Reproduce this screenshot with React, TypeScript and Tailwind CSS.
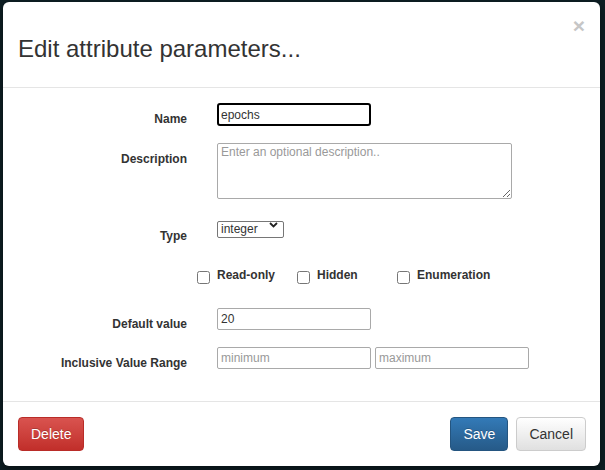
import { useState } from "react";

const labelCls =
  "w-[184px] shrink-0 pt-[8px] text-right text-[12px] leading-[17px] font-bold text-[#333]";
const inputCls =
  "h-[22px] border border-[#a9a9a9] rounded-[2px] px-[3px] text-[12px] text-[#333] placeholder:text-[#999] outline-none bg-white";

const App = () => {
  const [name, setName] = useState<string>("epochs");
  const [desc, setDesc] = useState<string>("");
  const [type, setType] = useState<string>("integer");
  const [defaultValue, setDefaultValue] = useState<string>("20");

  return (
    <div
      className="w-[605px] h-[470px] overflow-hidden bg-[#0e1f24] pt-[2px] pl-[3px]"
      style={{ fontFamily: '"Liberation Sans", Arial, sans-serif' }}
    >
      <div className="w-[597px] h-[464px] bg-white rounded-[6px] flex flex-col shadow-[0_3px_9px_rgba(0,0,0,0.5)]">
        {/* Header */}
        <div className="h-[86px] shrink-0 border-b border-[#e5e5e5] flex justify-between pl-[15px] pr-[15px]">
          <h4 className="pt-[34px] text-[24px] leading-[26px] text-[#333]">
            Edit attribute parameters...
          </h4>
          <button className="mt-[13px] self-start text-[21px] leading-[21px] font-bold text-[#c6c6c6]">
            ×
          </button>
        </div>

        {/* Body */}
        <div className="flex-1 pt-[15px]">
          {/* Name */}
          <div className="flex gap-[30px]">
            <label className={labelCls}>Name</label>
            <input
              type="text"
              value={name}
              onChange={(e) => setName(e.target.value)}
              className="h-[23px] w-[154px] border-2 border-black rounded-[3px] px-[2px] text-[12px] text-[#333] outline-none"
            />
          </div>

          {/* Description */}
          <div className="flex gap-[30px] mt-[15px]">
            <label className={labelCls}>Description</label>
            <textarea
              value={desc}
              onChange={(e) => setDesc(e.target.value)}
              placeholder="Enter an optional description.."
              className="h-[56px] w-[295px] border border-[#a9a9a9] rounded-[2px] px-[3px] py-[1px] text-[12px] leading-[15px] text-[#333] placeholder:text-[#999] outline-none"
            />
          </div>

          {/* Type */}
          <div className="flex gap-[30px] mt-[17px]">
            <label className="w-[184px] shrink-0 pt-[12px] text-right text-[12px] leading-[17px] font-bold text-[#333]">
              Type
            </label>
            <div className="relative w-[67px] h-[17px]">
              <select
                value={type}
                onChange={(e) => setType(e.target.value)}
                className="appearance-none w-full h-full border border-[#767676] rounded-[2px] pl-[3px] text-[12px] leading-[15px] text-[#333] bg-white outline-none"
              >
                <option value="integer">integer</option>
                <option value="float">float</option>
                <option value="string">string</option>
              </select>
              <svg
                className="absolute right-[6px] top-[6px] pointer-events-none"
                width="9"
                height="6"
                viewBox="0 0 9 6"
              >
                <path d="M1 1l3.5 3.5L8 1" fill="none" stroke="#222" strokeWidth="1.8" />
              </svg>
            </div>
          </div>

          {/* Checkboxes */}
          <div className="flex ml-[194px] mt-[20px] h-[20px] items-center">
            {["Read-only", "Hidden", "Enumeration"].map((item) => (
              <label key={item} className="w-[100px] flex items-center gap-[7px]">
                <input
                  type="checkbox"
                  className="w-[13px] h-[13px] mt-[4px] m-0 shrink-0"
                />
                <span className="text-[12px] font-bold leading-[17px] text-[#333]">
                  {item}
                </span>
              </label>
            ))}
          </div>

          {/* Default value */}
          <div className="flex gap-[30px] mt-[23px]">
            <label className={labelCls}>Default value</label>
            <input
              type="text"
              value={defaultValue}
              onChange={(e) => setDefaultValue(e.target.value)}
              className={inputCls + " w-[154px]"}
            />
          </div>

          {/* Range */}
          <div className="flex gap-[30px] mt-[14px]">
            <label className={labelCls}>Inclusive Value Range</label>
            <div className="flex gap-[4px]">
              <input type="text" placeholder="minimum" className={inputCls + " w-[154px]"} />
              <input type="text" placeholder="maximum" className={inputCls + " w-[154px]"} />
            </div>
          </div>
        </div>

        {/* Footer */}
        <div className="h-[65px] shrink-0 border-t border-[#e5e5e5] flex justify-between pl-[15px] pr-[14px] pt-[15px]">
          <button className="h-[34px] px-[12px] rounded-[4px] border border-[#b92c28] bg-gradient-to-b from-[#d9534f] to-[#c12e2a] text-white text-[14px] [text-shadow:0_-1px_0_rgba(0,0,0,0.2)]">
            Delete
          </button>
          <div className="flex gap-[8px]">
            <button className="h-[34px] px-[12px] rounded-[4px] border border-[#245580] bg-gradient-to-b from-[#337ab7] to-[#265a88] text-white text-[14px] [text-shadow:0_-1px_0_rgba(0,0,0,0.2)]">
              Save
            </button>
            <button className="h-[34px] px-[12px] rounded-[4px] border border-[#ccc] bg-gradient-to-b from-white to-[#e0e0e0] text-[#333] text-[14px]">
              Cancel
            </button>
          </div>
        </div>
      </div>
    </div>
  );
};

export default App;
